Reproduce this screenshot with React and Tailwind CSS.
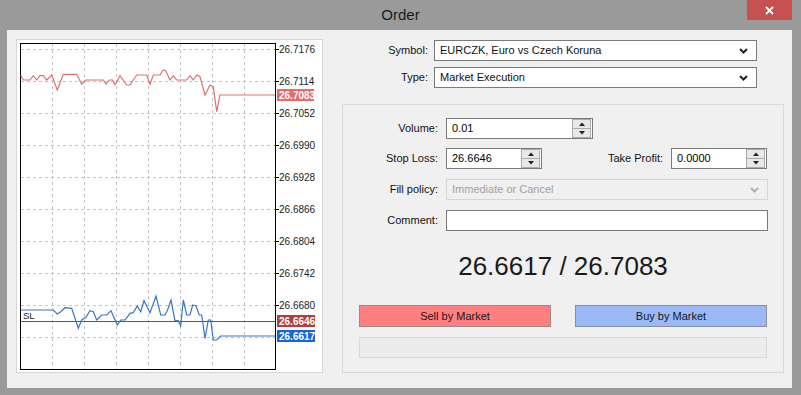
import React from 'react';

const FONT = { fontFamily: '"Liberation Sans", Arial, sans-serif' };

const askPts = [
  [20.7, 75], [23.3, 80], [30, 80], [33.3, 75.7], [36.7, 80], [40, 75.7], [43.3, 75.7], [46.7, 80],
  [51.7, 75], [57.3, 90], [63.3, 74.3], [76.7, 74.3], [81.7, 84.3], [86, 80], [103.3, 80], [106, 84.3],
  [109.3, 80], [112.7, 80], [115, 85], [120, 75.7], [126.7, 85], [130, 85], [136.7, 75], [146.7, 75],
  [150, 84.3], [153.3, 75], [160, 75], [163.3, 70], [165.7, 70.7], [170, 80], [173.3, 75.7], [176.7, 80],
  [186.7, 80], [190, 75.7], [193.3, 80], [196.7, 75], [200, 76.7], [205, 95], [210, 85], [213.3, 86.7],
  [216.7, 111.7], [220, 95], [275, 95],
];

const bidPts = [
  [20.7, 310], [53.3, 310], [57.3, 314], [60.7, 311.7], [65, 307.7], [71.7, 308.3], [78.3, 328.3],
  [81.7, 320], [86, 317.3], [90, 310.7], [93.3, 311.7], [96.7, 320], [101.7, 315], [106.7, 315],
  [111, 310.7], [117.3, 325], [120.7, 320], [125, 320], [130, 313.3], [133.3, 312.7], [137.3, 306],
  [140.7, 311.7], [144, 300.7], [150, 312.7], [156, 296], [160.7, 315], [165, 315], [167.3, 310.7],
  [171, 300], [175, 320.7], [178.3, 320.7], [180.7, 326], [183.3, 300], [186.7, 315], [190, 315],
  [192.7, 305], [196, 306], [199.3, 315], [201.7, 315], [205, 338.3], [208.3, 320], [210.7, 320],
  [213.3, 340], [216.7, 340], [220.7, 336], [275, 336],
];

const levels = ['26.7176', '26.7114', '26.7052', '26.6990', '26.6928', '26.6866', '26.6804', '26.6742', '26.6680'];
const hLines = [49, 81, 113, 145, 177, 209, 241, 273, 305, 337];
const vLines = [52, 84, 116, 148, 180, 212, 244];

const toPath = (pts) => pts.map((p) => p.join(',')).join(' ');

const Chart = () => (
  <svg width="305" height="332" viewBox="17 40 305 332" style={FONT}>
    {hLines.map((y) => (
      <line key={'h' + y} x1="21" x2="275" y1={y + 0.5} y2={y + 0.5} stroke="#c4c4c4" strokeDasharray="3 3" />
    ))}
    {vLines.map((x) => (
      <line key={'v' + x} x1={x + 0.5} x2={x + 0.5} y1="44" y2="369" stroke="#c4c4c4" strokeDasharray="3 3" />
    ))}
    <rect x="20.5" y="43.5" width="255" height="326" fill="none" stroke="#000" />
    {levels.map((t, i) => (
      <g key={t}>
        <line x1="276" x2="279" y1={hLines[i] + 0.5} y2={hLines[i] + 0.5} stroke="#000" />
        <text x="279" y={hLines[i] + 4} fontSize="10" fill="#222">{t}</text>
      </g>
    ))}
    <polyline points={toPath(askPts)} fill="none" stroke="#e07070" strokeWidth="1.2" />
    <line x1="21" x2="275" y1="321.5" y2="321.5" stroke="#b03434" strokeWidth="1.2" />
    <text x="23" y="319" fontSize="9.5" fill="#222">SL</text>
    <polyline points={toPath(bidPts)} fill="none" stroke="#3a74c4" strokeWidth="1.2" />
    <rect x="277" y="89" width="37" height="12" fill="#e86a6a" />
    <text x="279" y="99" fontSize="10" fontWeight="bold" fill="#fff">26.7083</text>
    <rect x="277" y="315" width="38" height="12" fill="#b53d3d" />
    <text x="279" y="325" fontSize="10" fontWeight="bold" fill="#fff">26.6646</text>
    <rect x="277" y="330" width="38" height="12" fill="#1565d6" />
    <text x="279" y="340" fontSize="10" fontWeight="bold" fill="#fff">26.6617</text>
  </svg>
);

const Chevron = ({ color = '#222' }) => (
  <svg width="9" height="6" viewBox="0 0 9 6">
    <polyline points="1,1 4.5,4.5 8,1" fill="none" stroke={color} strokeWidth="2" />
  </svg>
);

const Select = ({ value, width, disabled }) => (
  <div
    className={`h-[21px] flex items-center justify-between pl-[5px] pr-[8px] border ${
      disabled ? 'bg-[#f0f0f0] border-[#d5d5d5] text-[#a0a0a0]' : 'bg-white border-[#7a7a7a] text-[#111]'
    } ${width}`}
  >
    <span>{value}</span>
    <Chevron color={disabled ? '#b0b0b0' : '#222'} />
  </div>
);

const Spinner = () => (
  <div className="w-[19px] h-[19px] mr-[1px] border border-[#acacac] bg-[#e8e8e8] flex flex-col">
    <div className="flex-1 flex items-center justify-center border-b border-[#acacac]">
      <svg width="6" height="4" viewBox="0 0 6 4"><polygon points="0,4 3,0.5 6,4" fill="#222" /></svg>
    </div>
    <div className="flex-1 flex items-center justify-center">
      <svg width="6" height="4" viewBox="0 0 6 4"><polygon points="0,0 3,3.5 6,0" fill="#222" /></svg>
    </div>
  </div>
);

const SpinInput = ({ value, width }) => (
  <div className={`h-[21px] flex items-center justify-between pl-[5px] bg-white border border-[#7a7a7a] ${width}`}>
    <span>{value}</span>
    <Spinner />
  </div>
);

const Label = ({ children, width }) => (
  <div className={`text-right text-[#111] ${width}`}>{children}</div>
);

export default function App() {
  return (
    <div className="w-[801px] h-[395px] bg-[#9a9a9a] text-[11px] flex flex-col" style={FONT}>
      <div className="h-[30px] grid grid-cols-[1fr_auto_1fr] items-start">
        <div />
        <div className="h-[30px] flex items-center text-[15px] text-[#1a1a1a]">Order</div>
        <div className="flex justify-end pr-[9px]">
          <div className="w-[45px] h-[20px] bg-[#c75050] flex items-center justify-center">
            <svg width="9" height="9" viewBox="0 0 9 9">
              <path d="M1 1 L8 8 M8 1 L1 8" stroke="#fff" strokeWidth="1.8" />
            </svg>
          </div>
        </div>
      </div>

      <div className="ml-[7px] w-[785px] h-[358px] bg-[#f0f0f0] flex pt-[9px] pl-[9px]">
        <div className="w-[307px] h-[334px] bg-white border border-[#d6d6d6]">
          <Chart />
        </div>

        <div className="ml-[19px] w-[442px] flex flex-col">
          <div className="mt-[1px] flex items-center gap-[6px]">
            <Label width="w-[86px]">Symbol:</Label>
            <Select value="EURCZK, Euro vs Czech Koruna" width="w-[323px]" />
          </div>
          <div className="mt-[6px] flex items-center gap-[6px]">
            <Label width="w-[86px]">Type:</Label>
            <Select value="Market Execution" width="w-[323px]" />
          </div>

          <div className="mt-[16px] h-[269px] border border-[#d9d9d9] flex flex-col pt-[13px]">
            <div className="flex items-center gap-[8px]">
              <Label width="w-[95px]">Volume:</Label>
              <SpinInput value="0.01" width="w-[147px]" />
            </div>
            <div className="mt-[9px] flex items-center gap-[8px]">
              <Label width="w-[95px]">Stop Loss:</Label>
              <SpinInput value="26.6646" width="w-[96px]" />
              <Label width="w-[113px]">Take Profit:</Label>
              <SpinInput value="0.0000" width="w-[96px]" />
            </div>
            <div className="mt-[10px] flex items-center gap-[8px]">
              <Label width="w-[95px]">Fill policy:</Label>
              <Select value="Immediate or Cancel" width="w-[322px]" disabled />
            </div>
            <div className="mt-[10px] flex items-center gap-[8px]">
              <Label width="w-[95px]">Comment:</Label>
              <div className="w-[322px] h-[21px] bg-white border border-[#7a7a7a]" />
            </div>

            <div className="mt-[19px] h-[32px] flex items-center justify-center text-[26px] text-[#1a1a1a]">
              26.6617 / 26.7083
            </div>

            <div className="mt-[23px] pl-[16px] flex gap-[24px]">
              <div className="w-[192px] h-[22px] bg-[#ff8080] border border-[#9a8a8a] flex items-center justify-center text-[#2a1010]">
                Sell by Market
              </div>
              <div className="w-[192px] h-[22px] bg-[#9cb9f7] border border-[#8a8fa0] flex items-center justify-center text-[#10162a]">
                Buy by Market
              </div>
            </div>
            <div className="mt-[10px] ml-[16px] w-[408px] h-[21px] bg-[#ececec] border border-[#d8d8d8]" />
          </div>
        </div>
      </div>
    </div>
  );
}
